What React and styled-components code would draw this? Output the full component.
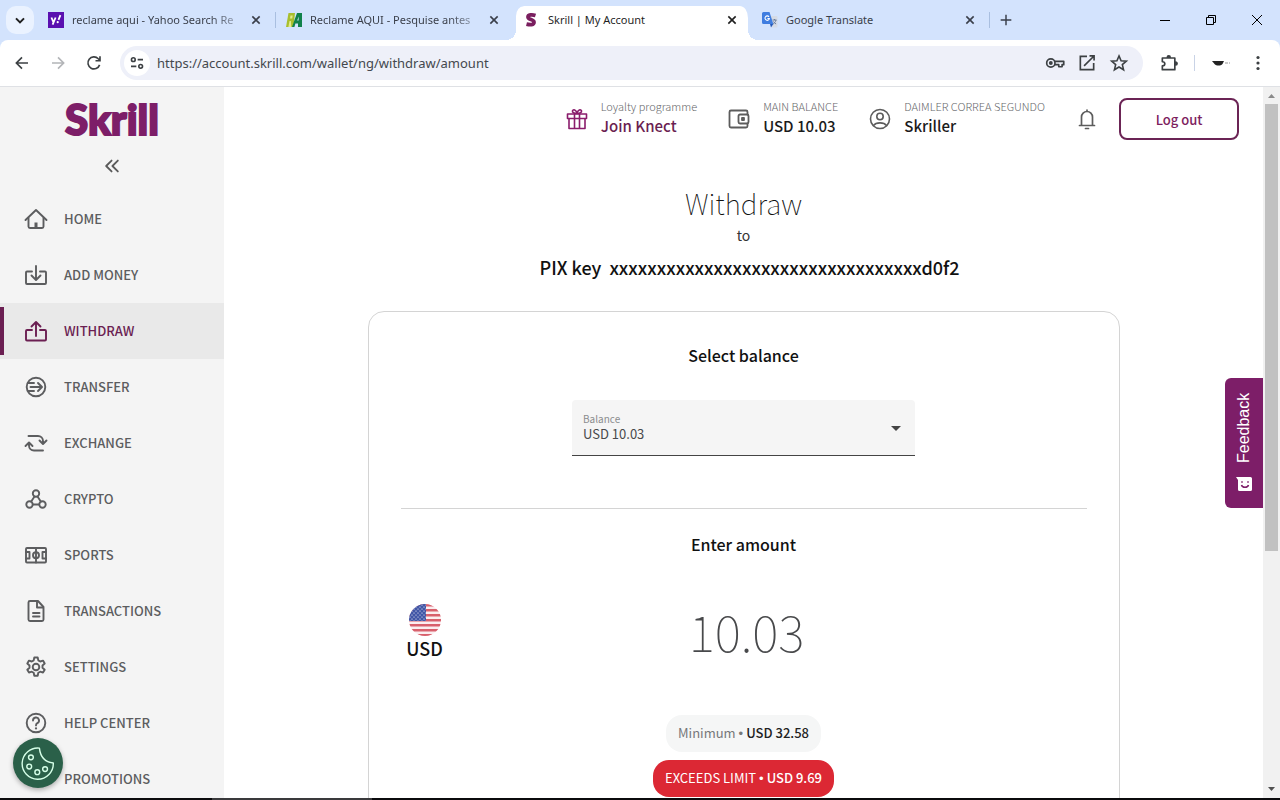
import React, { useState } from 'react';
import styled, { createGlobalStyle } from 'styled-components';

const GlobalStyle = createGlobalStyle`
  * {
    box-sizing: border-box;
  }

  body {
    margin: 0;
    overflow: hidden;
    font-family: 'Noto Sans CJK SC', 'Noto Sans', sans-serif;
    color: #111;
    background: #fff;
  }

  button, input, select {
    font-family: inherit;
    color: inherit;
    margin: 0;
  }

  button {
    cursor: pointer;
  }

  svg {
    display: block;
    flex: none;
  }
`;

const Icon = ({ size = 24, width = 1.6, children, ...rest }) => (
  <svg
    width={size}
    height={size}
    viewBox="0 0 24 24"
    fill="none"
    stroke="currentColor"
    strokeWidth={width}
    strokeLinecap="round"
    strokeLinejoin="round"
    aria-hidden="true"
    {...rest}
  >
    {children}
  </svg>
);

const CloseIcon = () => (
  <Icon size={16} width={2.4} strokeLinecap="butt">
    <path d="M6.5 6.5l11 11M17.5 6.5l-11 11" />
  </Icon>
);

const YahooIcon = () => (
  <svg width="16" height="16" viewBox="0 0 16 16" aria-hidden="true">
    <rect width="16" height="16" fill="#5a0fb0" />
    <path d="M3.4 5.5l2 4.6M7.6 5.5L4.6 12.6M12.4 3.2l-1.9 4.6" stroke="#fff" strokeWidth="1.8" fill="none" />
    <circle cx="9.7" cy="10.2" r="1.1" fill="#fff" />
  </svg>
);

const ReclameIcon = () => (
  <svg width="16" height="16" viewBox="0 0 16 16" aria-hidden="true">
    <path d="M2.500 1H9l-1.500 14H0z" fill="#a9bf2e" />
    <path d="M4.500 3.500h2.200l-.5 3H4zM3.500 9h1.400l.4 6H2.400z" fill="#e3e98f" />
    <path d="M11 1h5v14h-4v-3.500H9.400L8.400 15H6z" fill="#12824c" />
    <path d="M12.600 4.400v4h-1.400z" fill="#d3e3fd" />
  </svg>
);

const SkrillIcon = () => (
  <svg width="16" height="16" viewBox="0 0 16 16" aria-hidden="true">
    <path
      d="M11.500 3.500C8 2.400 4 2.700 4 5c0 2.900 6 2.200 6 5.200 0 2.800-3.800 2.800-7.500 1.900"
      fill="none"
      stroke="#7a1f5f"
      strokeWidth="3.800"
    />
  </svg>
);

const TranslateIcon = () => (
  <svg width="16" height="16" viewBox="0 0 16 16" aria-hidden="true">
    <path d="M7 4h7.500a1 1 0 0 1 1 1v9.500a1 1 0 0 1-1 1H10z" fill="#d5dbe6" />
    <path d="M10.500 8h4M12.500 7v1M14 8c-.4 2-2 3.500-3 4M11.500 9.500c.6 1.200 1.600 2 2.600 2.500" stroke="#6d7f9c" fill="none" />
    <path d="M1.500 0h6l3.800 12H1.500A1.500 1.500 0 0 1 0 10.500v-9A1.500 1.500 0 0 1 1.500 0z" fill="#3f7de0" />
    <path d="M7 4.800a2.200 2.200 0 1 0 .4 1.700H5.400" stroke="#fff" strokeWidth="1.100" fill="none" />
    <path d="M8 12h3.300L9 15.500z" fill="#2458b8" />
  </svg>
);

const FlagIcon = () => (
  <svg width="32" height="32" viewBox="0 0 32 32" role="img" aria-label="United States">
    <defs>
      <clipPath id="flag-round">
        <circle cx="16" cy="16" r="16" />
      </clipPath>
      <pattern id="flag-stars" width="4" height="4" patternUnits="userSpaceOnUse">
        <circle cx="1" cy="1" r=".6" fill="#fff" />
        <circle cx="3" cy="3" r=".6" fill="#fff" />
      </pattern>
    </defs>
    <g clipPath="url(#flag-round)">
      <rect width="32" height="32" fill="#fbeef0" />
      {[0, 5, 10, 15, 20, 25, 30].map((y) => (
        <rect key={y} y={y} width="32" height="2.500" fill="#d8606c" />
      ))}
      <rect width="17" height="17" fill="#4156a6" />
      <rect width="17" height="17" fill="url(#flag-stars)" />
    </g>
  </svg>
);

const tabs = [
  { title: 'reclame aqui - Yahoo Search Re', icon: <YahooIcon />, divider: true, faded: true },
  { title: 'Reclame AQUI - Pesquise antes', icon: <ReclameIcon />, faded: true },
  { title: 'Skrill | My Account', icon: <SkrillIcon />, active: true },
  { title: 'Google Translate', icon: <TranslateIcon />, divider: true },
];

const navItems = [
  {
    label: 'HOME',
    icon: (
      <>
        <path d="M1.500 13L12 3l10.500 10" />
        <path d="M4.500 11v8.500A1.500 1.500 0 0 0 6 21h12a1.500 1.500 0 0 0 1.500-1.500V11" />
        <path d="M12 21v-5.500" strokeWidth="3" strokeLinecap="butt" />
      </>
    ),
  },
  {
    label: 'ADD MONEY',
    icon: (
      <>
        <path d="M8 8.500H3a1 1 0 0 0-1 1V20a1 1 0 0 0 1 1h18a1 1 0 0 0 1-1V9.500a1 1 0 0 0-1-1h-5" />
        <path d="M12 3v13.500M7.500 12.500l4.500 4.500 4.500-4.500" />
      </>
    ),
  },
  {
    label: 'WITHDRAW',
    active: true,
    icon: (
      <>
        <path d="M8 11H3a1 1 0 0 0-1 1v8.500a1 1 0 0 0 1 1h18a1 1 0 0 0 1-1V12a1 1 0 0 0-1-1h-5" />
        <path d="M12 17V3.500M7.500 7.500L12 3l4.500 4.500" />
      </>
    ),
  },
  {
    label: 'TRANSFER',
    icon: (
      <>
        <circle cx="12" cy="12" r="9.300" />
        <path d="M6.500 12H17.500M14 8l4 4-4 4M4 8h6M4 16h6" />
      </>
    ),
  },
  {
    label: 'EXCHANGE',
    icon: (
      <>
        <path d="M4.500 5h9.500a5 5 0 0 1 5 5v2.500M15.500 9.500l3.500 3.500 3.500-3.500" />
        <path d="M19 19.500h-9a5 5 0 0 1-5-5V12M1.500 15L5 11.500 8.500 15" />
      </>
    ),
  },
  {
    label: 'CRYPTO',
    icon: (
      <>
        <circle cx="12" cy="6.500" r="3.200" />
        <circle cx="5.500" cy="17.500" r="3.200" />
        <circle cx="18.500" cy="17.500" r="3.200" />
        <path d="M10.500 9.500l-3.300 5M13.500 9.500l3.300 5M9 17.500h6" />
      </>
    ),
  },
  {
    label: 'SPORTS',
    icon: (
      <>
        <rect x="2" y="5" width="20" height="14.500" rx="1" />
        <circle cx="12" cy="12.200" r="3" />
        <path d="M12 5v14.500M2 9h3.500v6.500H2M22 9h-3.500v6.500H22" />
      </>
    ),
  },
  {
    label: 'TRANSACTIONS',
    icon: (
      <>
        <path d="M14 2H6a1.500 1.500 0 0 0-1.500 1.500v17A1.500 1.500 0 0 0 6 22h12a1.500 1.500 0 0 0 1.500-1.500V8z" />
        <path d="M13 2.500V8.500h6M9 14h6.500M9 17.500h6.500" />
      </>
    ),
  },
  {
    label: 'SETTINGS',
    icon: (
      <>
        <circle cx="12" cy="12" r="3.300" />
        <path d="M10.300 2.500h3.400l.6 2.900 1.900 1.100 2.800-.9 1.700 2.900-2.200 2v2.200l2.200 2-1.700 2.900-2.800-.9-1.900 1.100-.6 3h-3.400l-.6-3-1.900-1.100-2.800.9-1.700-2.900 2.200-2v-2.200l-2.200-2 1.700-2.900 2.800.9 1.900-1.100z" />
      </>
    ),
  },
  {
    label: 'HELP CENTER',
    icon: (
      <>
        <circle cx="12" cy="12" r="9.300" />
        <path d="M9 9.500a3 3 0 1 1 4.300 2.700c-.9.500-1.300 1-1.300 2.200" />
        <path d="M12 17.300v.1" strokeWidth="2.200" />
      </>
    ),
  },
  { label: 'PROMOTIONS', icon: null },
];

const BrowserTabs = () => (
  <TabStrip>
    <TabSearch aria-label="Search tabs">
      <Icon size={16} width={3} strokeLinecap="butt" strokeLinejoin="miter"><path d="M6 9.500l6 6 6-6" /></Icon>
    </TabSearch>
    <TabList>
      {tabs.map((tab) => (
        <Tab key={tab.title} $active={tab.active} $divider={tab.divider}>
          {tab.icon}
          <TabTitle $faded={tab.faded}>{tab.title}</TabTitle>
          <TabClose aria-label="Close tab"><CloseIcon /></TabClose>
        </Tab>
      ))}
    </TabList>
    <NewTab aria-label="New tab">
      <Icon size={16} width={2.2} strokeLinecap="butt"><path d="M12 4v16M4 12h16" /></Icon>
    </NewTab>
    <WindowButtons>
      <WindowButton aria-label="Minimize">
        <svg width="10" height="10" viewBox="0 0 10 10"><path d="M0 5.500h10" stroke="currentColor" /></svg>
      </WindowButton>
      <WindowButton aria-label="Restore">
        <svg width="10" height="10" viewBox="0 0 10 10" fill="none" stroke="currentColor">
          <path d="M.5 2.500h7v7h-7zM2.500 2.500v-2h7v7h-2" />
        </svg>
      </WindowButton>
      <WindowButton aria-label="Close">
        <svg width="10" height="10" viewBox="0 0 10 10"><path d="M0 0l10 10M10 0L0 10" stroke="currentColor" /></svg>
      </WindowButton>
    </WindowButtons>
  </TabStrip>
);

const BrowserToolbar = () => (
  <Toolbar>
    <ToolButton aria-label="Back">
      <Icon size={18} width={2.2} strokeLinecap="butt" strokeLinejoin="miter">
        <path d="M20 12H5M12 4.500L4.500 12l7.500 7.500" />
      </Icon>
    </ToolButton>
    <ToolButton aria-label="Forward" $muted>
      <Icon size={18} width={2.2} strokeLinecap="butt" strokeLinejoin="miter">
        <path d="M4 12h15M12 4.500l7.500 7.500-7.500 7.500" />
      </Icon>
    </ToolButton>
    <ToolButton aria-label="Reload">
      <Icon size={18} width={2.2} strokeLinecap="butt" strokeLinejoin="miter">
        <path d="M19.500 14.500a8 8 0 1 1-1.800-8.200L20 8.500M20 3v6h-6" />
      </Icon>
    </ToolButton>
    <AddressBar>
      <SiteInfo aria-label="Site information">
        <Icon size={16} width={2.4} strokeLinecap="butt">
          <circle cx="6.500" cy="7" r="2.800" />
          <path d="M13 7h8M3 17h8" />
          <circle cx="17.500" cy="17" r="2.800" />
        </Icon>
      </SiteInfo>
      <AddressInput aria-label="Address" defaultValue="https://account.skrill.com/wallet/ng/withdraw/amount" />
      <AddressAction aria-label="Passwords">
        <Icon size={20} width={2}>
          <circle cx="7" cy="12" r="5" />
          <circle cx="7" cy="12" r="1.300" fill="currentColor" />
          <path d="M12 10h10.500v4h-2v2.500h-4V14H12" />
        </Icon>
      </AddressAction>
      <AddressAction aria-label="Open in app">
        <Icon size={20} width={2} strokeLinecap="butt" strokeLinejoin="miter">
          <path d="M12 4H4v16h16v-8M8.500 15.500L19.500 4.500M15 3.500h5.500V9" />
        </Icon>
      </AddressAction>
      <AddressAction aria-label="Bookmark">
        <Icon size={20} width={1.9}>
          <path d="M12 3.500l2.500 5.800 6.300.5-4.800 4.100 1.500 6.200-5.500-3.300-5.500 3.300L8 13.900 3.200 9.800l6.300-.5z" strokeLinejoin="miter" />
        </Icon>
      </AddressAction>
    </AddressBar>
    <ToolbarEnd>
      <ToolButton aria-label="Extensions">
        <Icon size={20} width={2}>
          <path d="M4 6h15v14H4v-4.500c4 0 4-5 0-5z" />
          <path d="M10 5a1.700 1.700 0 0 1 3.400 0zM20 11a1.700 1.700 0 0 1 0 3.400z" fill="currentColor" />
        </Icon>
      </ToolButton>
      <ToolbarDivider />
      <ToolButton aria-label="Profile">
        <svg width="24" height="24" viewBox="0 0 24 24">
          <path d="M4 10h12l-1.500 3c-2 2-6 2-8 0z" fill="#222" />
          <path d="M17 12h5" stroke="#bbb" strokeWidth="1.500" strokeDasharray="3 1" />
        </svg>
      </ToolButton>
      <ToolButton aria-label="Menu">
        <svg width="20" height="20" viewBox="0 0 20 20" fill="currentColor">
          <circle cx="10" cy="4.500" r="1.600" />
          <circle cx="10" cy="10" r="1.600" />
          <circle cx="10" cy="15.500" r="1.600" />
        </svg>
      </ToolButton>
    </ToolbarEnd>
  </Toolbar>
);

const Sidebar = () => (
  <SidebarContainer>
    <Logo href="#">Skrill</Logo>
    <CollapseButton aria-label="Collapse menu">
      <Icon size={20} width={2.2}><path d="M11.500 5.500L5 12l6.500 6.500M19 5.500L12.500 12l6.500 6.500" /></Icon>
    </CollapseButton>
    <nav>
      {navItems.map((item) => (
        <NavLink key={item.label} href="#" $active={item.active}>
          <Icon width={1.9}>{item.icon}</Icon>
          <NavLabel>{item.label}</NavLabel>
        </NavLink>
      ))}
    </nav>
  </SidebarContainer>
);

const Header = () => (
  <HeaderBar>
    <HeaderItem $accent>
      <Icon width={1.6}>
        <path d="M2.500 7h19v4.500h-19zM4 11.500h16V21.500H4zM9.500 7v14.500M14.500 7v14.500" />
        <path d="M12 6.500C9 6.500 7 5.500 7.500 3.800c.6-1.800 3.800-1.300 4.500 2.700.7-4 3.900-4.500 4.500-2.700.5 1.700-1.500 2.700-4.500 2.700z" />
      </Icon>
      <HeaderText>
        <HeaderLabel>Loyalty programme</HeaderLabel>
        <HeaderValue $accent>Join Knect</HeaderValue>
      </HeaderText>
    </HeaderItem>
    <HeaderItem>
      <Icon width={1.8}>
        <path d="M20.500 7.500V5a1.500 1.500 0 0 0-1.500-1.500H4A1.500 1.500 0 0 0 2.500 5v14A1.500 1.500 0 0 0 4 20.500h15a1.500 1.500 0 0 0 1.500-1.500v-2.500" />
        <rect x="11.500" y="7.500" width="10" height="9" rx="1.500" />
        <rect x="15" y="11" width="2" height="2" fill="currentColor" />
      </Icon>
      <HeaderText>
        <HeaderLabel>MAIN BALANCE</HeaderLabel>
        <HeaderValue>USD 10.03</HeaderValue>
      </HeaderText>
    </HeaderItem>
    <HeaderItem>
      <Icon width={1.6}>
        <circle cx="12" cy="12" r="9.500" />
        <circle cx="12" cy="9.500" r="3.200" />
        <path d="M5.500 18.500c2.500-3.500 10.500-3.500 13 0" />
      </Icon>
      <HeaderText>
        <HeaderLabel>DAIMLER CORREA SEGUNDO</HeaderLabel>
        <HeaderValue>Skriller</HeaderValue>
      </HeaderText>
    </HeaderItem>
    <BellButton aria-label="Notifications">
      <Icon width={1.7}>
        <path d="M4.500 18.500h15M6.500 18.500V10a5.500 5.500 0 0 1 11 0v8.500M12 4.500V3" />
        <path d="M10.500 21.500h3" />
      </Icon>
    </BellButton>
    <LogoutButton>Log out</LogoutButton>
  </HeaderBar>
);

const App = () => {
  const [amount, setAmount] = useState('10.03');

  return (
    <Window>
      <GlobalStyle />
      <BrowserTabs />
      <BrowserToolbar />
      <Page>
        <Sidebar />
        <Main>
          <Header />
          <Title>Withdraw</Title>
          <Subtitle>to</Subtitle>
          <Recipient>
            <span>PIX key</span>
            <span>xxxxxxxxxxxxxxxxxxxxxxxxxxxxxxxxxd0f2</span>
          </Recipient>
          <Card>
            <CardTitle>Select balance</CardTitle>
            <BalanceField>
              <BalanceLabel htmlFor="balance">Balance</BalanceLabel>
              <BalanceSelect id="balance">
                <option>USD 10.03</option>
              </BalanceSelect>
              <SelectArrow viewBox="0 0 10 5"><path d="M0 0h10L5 5z" fill="currentColor" /></SelectArrow>
            </BalanceField>
            <Divider />
            <CardTitle as="label" htmlFor="amount">Enter amount</CardTitle>
            <AmountRow>
              <Currency>
                <FlagIcon />
                USD
              </Currency>
              <AmountInput id="amount" value={amount} onChange={(e) => setAmount(e.target.value)} />
            </AmountRow>
            <Limits>
              <Limit>Minimum<Bullet>•</Bullet><strong>USD 32.58</strong></Limit>
              <Limit $error>EXCEEDS LIMIT<Bullet>•</Bullet><strong>USD 9.69</strong></Limit>
            </Limits>
          </Card>
        </Main>
        <Scrollbar>
          <svg width="7" height="4" viewBox="0 0 7 4"><path d="M0 4h7L3.500 0z" fill="#8a8a8a" /></svg>
          <ScrollTrack>
            <ScrollThumb />
          </ScrollTrack>
          <svg width="7" height="4" viewBox="0 0 7 4"><path d="M0 0h7L3.500 4z" fill="#505050" /></svg>
        </Scrollbar>
        <FeedbackButton>
          Feedback
          <svg width="16" height="16" viewBox="0 0 16 16">
            <path d="M0 0h14.500A1.500 1.500 0 0 1 16 1.500v11a1.500 1.500 0 0 1-1.500 1.500h-11A1.500 1.500 0 0 1 2 12.500V3z" fill="#fff" />
            <path d="M5.500 8c.8 3 6.200 3 7 0M6 4.200v1.500M12 4.200v1.500" stroke="#7d1e68" strokeWidth="1.500" fill="none" />
          </svg>
        </FeedbackButton>
        <CookieButton aria-label="Cookie settings">
          <Icon size={34} width={1}>
            <path d="M13 1.500A11 11 0 1 0 22.800 12c-5-.5-9-3-9.800-10.500z" />
            <circle cx="7" cy="8" r="1.700" />
            <circle cx="5.800" cy="14.500" r="1.700" />
            <circle cx="11.500" cy="18.500" r="1.700" />
            <circle cx="17" cy="16.300" r="1.700" />
          </Icon>
        </CookieButton>
      </Page>
      <BottomEdge />
    </Window>
  );
};

const Window = styled.div`
  display: flex;
  flex-direction: column;
  height: 100vh;
  background: #d3e3fd;
`;

const PlainButton = styled.button`
  display: flex;
  align-items: center;
  justify-content: center;
  flex: none;
  padding: 0;
  border: none;
  background: transparent;
`;

const TabStrip = styled.div`
  display: flex;
  align-items: center;
  flex: none;
  height: 40px;
  padding-left: 6px;
  font-family: 'Noto Sans', sans-serif;
  color: #3a3f4a;
`;

const TabSearch = styled(PlainButton)`
  width: 28px;
  height: 28px;
  margin-right: 4px;
  border-radius: 10px;
  background: #eaf2ff;
  color: #1f1f1f;
`;

const TabList = styled.div`
  display: flex;
  align-self: flex-end;
  flex: 0 1 952px;
  min-width: 0;
`;

const Tab = styled.div`
  position: relative;
  display: flex;
  align-items: center;
  flex: 1 1 0;
  min-width: 0;
  height: 34px;
  padding: 0 12px 6px 10px;

  ${({ $divider }) => $divider && `
    background: linear-gradient(#a9bfe0, #a9bfe0) right 6px / 1px 16px no-repeat;
  `}

  ${({ $active }) => $active && `
    padding: 0 8px 6px;
    border: solid transparent;
    border-width: 0 4px 0 2px;
    border-radius: 10px 12px 0 0;
    background: #fff padding-box;
    color: #1f1f1f;

    /* curved feet that join the tab to the toolbar */
    &::before,
    &::after {
      content: '';
      position: absolute;
      bottom: 0;
      width: 10px;
      height: 10px;
    }

    &::before {
      right: 100%;
      background: radial-gradient(circle at 0 0, transparent 10px, #fff 10px);
    }

    &::after {
      left: 100%;
      background: radial-gradient(circle at 100% 0, transparent 10px, #fff 10px);
    }
  `}
`;

const TabTitle = styled.span`
  flex: 1;
  min-width: 0;
  margin: 0 4px 0 8px;
  white-space: nowrap;
  font-size: 11px;
  line-height: 18px;
  mask-image: ${({ $faded }) =>
    $faded ? 'linear-gradient(to right, #000 80%, rgba(0, 0, 0, 0.2))' : 'none'};
`;

const TabClose = styled(PlainButton)`
  width: 16px;
  height: 16px;
`;

const NewTab = styled(PlainButton)`
  width: 32px;
  height: 28px;
`;

const WindowButtons = styled.div`
  display: flex;
  margin-left: auto;
`;

const WindowButton = styled(PlainButton)`
  width: 46px;
  height: 40px;
  color: #000;
`;

const Toolbar = styled.div`
  display: flex;
  align-items: center;
  flex: none;
  height: 47px;
  padding: 0 4px;
  border-bottom: 1px solid #dfe1e5;
  border-radius: 8px 8px 0 0;
  background: #fff;
`;

const ToolButton = styled(PlainButton)`
  width: 36px;
  height: 36px;
  color: ${({ $muted }) => ($muted ? '#b3b5b8' : '#3c4043')};
`;

const AddressBar = styled.div`
  display: flex;
  align-items: center;
  flex: 1;
  height: 34px;
  margin-left: 8px;
  padding: 0 8px 0 4px;
  border-radius: 17px;
  background: #eef0f9;
`;

const SiteInfo = styled(PlainButton)`
  width: 26px;
  height: 26px;
  border-radius: 50%;
  background: #fff;
  color: #3c4043;
`;

const AddressInput = styled.input`
  flex: 1;
  min-width: 0;
  padding: 0 7px;
  border: none;
  outline: none;
  background: transparent;
  color: #44484e;
  font-family: 'Noto Sans', sans-serif;
  font-size: 13px;
  line-height: 20px;
`;

const AddressAction = styled(PlainButton)`
  width: 32px;
  height: 32px;
  color: #3c4043;
`;

const ToolbarEnd = styled.div`
  display: flex;
  align-items: center;
  gap: 2px;
  padding-left: 8px;
`;

const ToolbarDivider = styled.div`
  width: 1px;
  height: 16px;
  margin: 0 5px;
  background: #c9d3e6;
`;

const Page = styled.div`
  position: relative;
  display: flex;
  flex: 1;
  min-height: 0;
  overflow: hidden;
  background: #fff;
`;

const SidebarContainer = styled.aside`
  flex: none;
  width: 224px;
  background: #f4f4f4;
`;

const Logo = styled.a`
  display: block;
  padding-top: 7px;
  text-align: center;
  text-decoration: none;
  font-family: Lato, sans-serif;
  font-size: 42px;
  font-weight: 900;
  line-height: 50px;
  color: #7d1e68;
  -webkit-text-stroke: 2px #7d1e68;
`;

const CollapseButton = styled(PlainButton)`
  width: 40px;
  height: 40px;
  margin: 2px auto 5px;
  color: #5a5a5a;
`;

const NavLink = styled.a`
  display: flex;
  align-items: center;
  gap: 16px;
  height: 56px;
  padding: 0 24px;
  text-decoration: none;
  font-size: 13px;
  font-weight: 500;
  color: ${({ $active }) => ($active ? '#6b1f52' : '#5c5d5f')};
  background: ${({ $active }) =>
    $active ? 'linear-gradient(#6b1f52, #6b1f52) 0 4px / 4px 48px no-repeat #e9e9e9' : 'transparent'};
`;

const NavLabel = styled.span`
  padding-bottom: 2px;
`;

const Main = styled.main`
  display: flex;
  flex-direction: column;
  align-items: center;
  flex: 1;
  min-width: 0;
`;

const HeaderBar = styled.header`
  display: flex;
  align-items: center;
  justify-content: flex-end;
  align-self: stretch;
  gap: 30px;
  height: 53px;
  padding: 11px 24px 0;
`;

const HeaderItem = styled.div`
  display: flex;
  align-items: center;
  gap: 12px;
  white-space: nowrap;
  color: ${({ $accent }) => ($accent ? '#8a1c6c' : '#5c5c5c')};
`;

const HeaderText = styled.div`
  padding-bottom: 4px;
`;

const HeaderLabel = styled.div`
  font-size: 11px;
  font-weight: 300;
  line-height: 18px;
  color: #66676a;
`;

const HeaderValue = styled.div`
  font-size: 15px;
  font-weight: 500;
  line-height: 22px;
  color: ${({ $accent }) => ($accent ? '#6b1f52' : '#1b1b1b')};
`;

const BellButton = styled(PlainButton)`
  margin-right: -10px;
  color: #5c5c5c;
`;

const LogoutButton = styled.button`
  width: 120px;
  height: 42px;
  border: 2px solid #6b2455;
  border-radius: 8px;
  background: #fff;
  font-size: 13px;
  font-weight: 500;
  color: #7d1e5e;
`;

const Title = styled.h1`
  margin: 43px 0 0;
  font-size: 28px;
  font-weight: 100;
  line-height: 40px;
  color: #111;
`;

const Subtitle = styled.div`
  font-size: 14px;
  line-height: 24px;
  color: #333;
`;

const Recipient = styled.div`
  display: flex;
  gap: 8px;
  padding: 8px 0 32px 12px;
  font-size: 18px;
  font-weight: 500;
  line-height: 24px;
`;

const Card = styled.section`
  display: flex;
  flex-direction: column;
  align-items: center;
  width: calc(100% - 48px);
  max-width: 752px;
  padding: 32px;
  border: 1px solid #d4d4d4;
  border-radius: 16px;
`;

const CardTitle = styled.h2`
  margin: 0;
  padding-bottom: 2px;
  font-size: 16px;
  font-weight: 500;
  line-height: 22px;
`;

const BalanceField = styled.div`
  position: relative;
  display: flex;
  flex-direction: column;
  width: 100%;
  max-width: 343px;
  height: 56px;
  margin: 32px 0 52px;
  border-bottom: 1px solid #444;
  border-radius: 4px 4px 0 0;
  background: #f5f5f5;
`;

const BalanceLabel = styled.label`
  padding: 12px 11px 0;
  font-size: 10px;
  line-height: 14px;
  color: #8b8c8e;
`;

const BalanceSelect = styled.select`
  appearance: none;
  padding: 0 11px;
  border: none;
  outline: none;
  background: transparent;
  font-size: 13px;
  line-height: 16px;
  color: #48494b;
`;

const SelectArrow = styled.svg`
  position: absolute;
  top: 26px;
  right: 14px;
  width: 10px;
  height: 5px;
  color: #444;
  pointer-events: none;
`;

const Divider = styled.hr`
  width: 100%;
  margin: 0 0 24px;
  border: none;
  border-top: 1px solid #d4d4d4;
`;

const AmountRow = styled.div`
  display: grid;
  grid-template-columns: 48px 1fr 48px;
  align-items: center;
  width: 100%;
  margin: 45px 0 53px;
`;

const Currency = styled.div`
  display: flex;
  flex-direction: column;
  align-items: center;
  font-size: 18px;
  font-weight: 500;
  line-height: 24px;
`;

const AmountInput = styled.input`
  width: 100%;
  height: 60px;
  padding: 0 0 4px 6px;
  border: none;
  outline: none;
  background: transparent;
  text-align: center;
  font-size: 50px;
  font-weight: 100;
  color: #48494b;
`;

const Limits = styled.div`
  display: flex;
  flex-direction: column;
  align-items: center;
  gap: 8px;
`;

const Limit = styled.div`
  padding: 6px 12px;
  border-radius: 16px;
  font-size: 13px;
  line-height: 24px;
  white-space: nowrap;
  color: ${({ $error }) => ($error ? '#fff' : '#77787a')};
  background: ${({ $error }) => ($error ? '#dc2834' : '#f5f6f6')};

  strong {
    font-weight: 500;
    color: ${({ $error }) => ($error ? '#fff' : '#222')};
  }
`;

const Bullet = styled.span`
  margin: 0 3px;
  font-family: 'Liberation Sans', sans-serif;
`;

const Scrollbar = styled.div`
  display: flex;
  flex-direction: column;
  align-items: center;
  flex: none;
  width: 17px;
  padding: 7px 0;
  background: #f1f1f1;
`;

const ScrollTrack = styled.div`
  flex: 1;
  padding: 6px 0;
`;

const ScrollThumb = styled.div`
  width: 13px;
  height: 66%;
  background: #c1c1c1;
`;

const FeedbackButton = styled(PlainButton)`
  position: absolute;
  top: 50%;
  right: 17px;
  gap: 14px;
  width: 38px;
  height: 130px;
  border-radius: 0 6px 6px 0;
  background: #7d1e68;
  writing-mode: vertical-rl;
  transform: translateY(-50%) rotate(180deg);
  flex-direction: row-reverse;
  font-family: 'Liberation Sans', sans-serif;
  font-size: 16px;
  color: #fff;

  svg {
    transform: rotate(180deg);
  }
`;

const CookieButton = styled(PlainButton)`
  position: absolute;
  bottom: 10px;
  left: 13px;
  width: 50px;
  height: 50px;
  border-radius: 50%;
  background: #2a6049;
  box-shadow: 0 2px 5px rgba(0, 0, 0, 0.3);
  color: #d5ffe8;
`;

const BottomEdge = styled.div`
  flex: none;
  height: 2px;
  background: linear-gradient(#3a3a3c, #3a3a3c) 212px 0 / 160px 2px no-repeat #0b0b0d;
`;

export default App;
